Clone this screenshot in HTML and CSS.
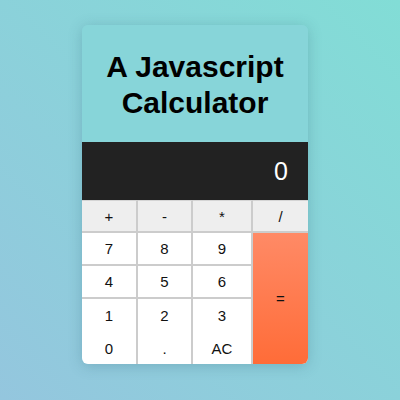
FILE: index.html
```html
<!DOCTYPE html>
<html>
<head>
<meta charset="utf-8">
<link rel="stylesheet" href="styles.css">
</head>
<body>
<div class="calc">
  <div class="title">A Javascript<br>Calculator</div>
  <div class="display">0</div>
  <div class="keys">
    <div class="key op">+</div>
    <div class="key op">-</div>
    <div class="key op">*</div>
    <div class="key op last">/</div>
    <div class="key">7</div>
    <div class="key">8</div>
    <div class="key">9</div>
    <div class="key equals">=</div>
    <div class="key">4</div>
    <div class="key">5</div>
    <div class="key">6</div>
    <div class="key nob">1</div>
    <div class="key nob">2</div>
    <div class="key nob">3</div>
    <div class="key nob">0</div>
    <div class="key nob">.</div>
    <div class="key nob">AC</div>
  </div>
</div>
</body>
</html>
```
FILE: styles.css
```css
html, body {
  margin: 0;
  height: 100%;
}
body {
  background: linear-gradient(to top right, #94c6de, #82ddd6);
  display: flex;
  justify-content: center;
  align-items: flex-start;
  padding: 25px 10px 0 0;
  box-sizing: border-box;
  font-family: "Liberation Sans", Arial, sans-serif;
}
.calc {
  width: 226px;
  border-radius: 6px;
  overflow: hidden;
  box-shadow: 0 2px 14px rgba(40, 90, 110, 0.25);
}
.title {
  height: 117px;
  background: #87d5d9;
  display: flex;
  align-items: center;
  justify-content: center;
  text-align: center;
  font-weight: bold;
  font-size: 30px;
  line-height: 36px;
  color: #000;
  padding-top: 2px;
  box-sizing: border-box;
}
.display {
  height: 58px;
  background: #222222;
  color: #fff;
  font-size: 25px;
  display: flex;
  align-items: center;
  justify-content: flex-end;
  padding-right: 20px;
}
.keys {
  display: grid;
  grid-template-columns: 56px 55px 60px 55px;
  grid-template-rows: 33px 33px 33px 33px 32px;
  background: #fff;
}
.key {
  display: flex;
  align-items: center;
  justify-content: center;
  font-size: 15px;
  color: #111;
  border-right: 2px solid #cccccc;
  border-bottom: 2px solid #cccccc;
  box-sizing: border-box;
}
.op {
  background: #eeeeee;
  border-top: 1px solid #d4d4d4;
}
.op.last {
  border-right: none;
}
.nob {
  border-bottom: none;
}
.equals {
  grid-column: 4;
  grid-row: 2 / span 4;
  border: none;
  background: linear-gradient(#ff8a66, #ff6c38);
}
```
